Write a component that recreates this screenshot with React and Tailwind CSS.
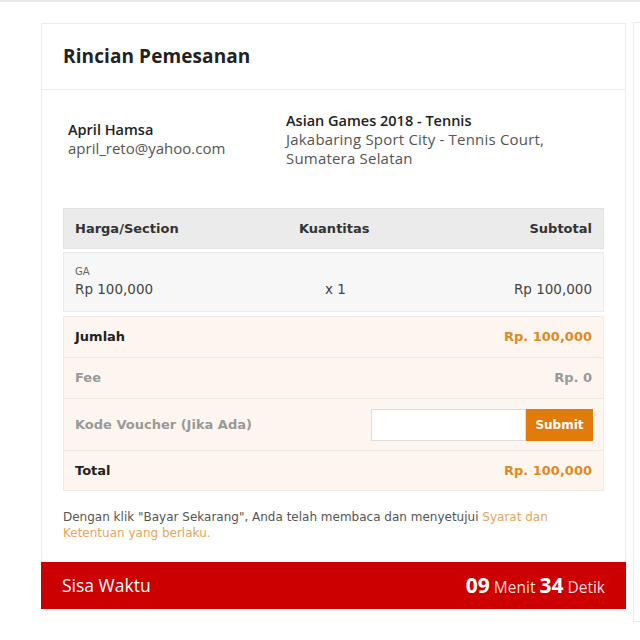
import React from 'react';

const rows = [
  { label: 'Jumlah', value: 'Rp. 100,000', strong: true },
  { label: 'Fee', value: 'Rp. 0', strong: false },
];

export default function App() {
  return (
    <div className="w-[640px] h-[640px] bg-white border-t-2 border-[#e8e8e8] overflow-hidden relative font-['Open_Sans',sans-serif]">
      {/* second card peeking on the right */}
      <div className="absolute left-[633px] top-[20px] w-[40px] h-[600px] border border-[#ececec] bg-white" />

      <div className="ml-[41px] mt-[21px] w-[585px] border border-[#ececec] bg-white">
        {/* Header */}
        <div className="h-[66px] flex items-center px-[21px] border-b border-[#ececec]">
          <h1 className="text-[19px] font-bold text-[#222] tracking-[0.1px]">Rincian Pemesanan</h1>
        </div>

        {/* Customer / event */}
        <div className="flex px-[21px] pt-[21px] h-[118px]">
          <div className="w-[223px] pl-[5px] pt-[9px] leading-[19px] text-[15px]">
            <div className="font-semibold text-[#222] text-[14.5px]">April Hamsa</div>
            <div className="text-[#555]">april_reto@yahoo.com</div>
          </div>
          <div className="leading-[19px] text-[15px]">
            <div className="font-semibold text-[#222] text-[14.5px]">Asian Games 2018 - Tennis</div>
            <div className="text-[#555] tracking-[0.2px]">Jakabaring Sport City - Tennis Court,</div>
            <div className="text-[#555] tracking-[0.2px]">Sumatera Selatan</div>
          </div>
        </div>

        {/* Table */}
        <div className="mx-[21px] font-['DejaVu_Sans',sans-serif]">
          <div className="h-[41px] bg-[#ebebeb] border border-[#e2e2e2] flex items-center px-[11px] text-[13px] font-bold text-[#333]">
            <div className="w-[224px]">Harga/Section</div>
            <div className="flex-1">Kuantitas</div>
            <div>Subtotal</div>
          </div>
          <div className="mt-[3px] h-[60px] bg-[#f6f7f6] border border-[#ececec] flex items-center px-[11px] text-[13.5px] text-[#444]">
            <div className="w-[250px]">
              <div className="text-[10px] text-[#666] leading-[14px]">GA</div>
              <div className="leading-[20px]">Rp 100,000</div>
            </div>
            <div className="flex-1 pt-[14px]">x 1</div>
            <div className="pt-[14px]">Rp 100,000</div>
          </div>
          <div className="mt-[4px] bg-[#fdf6f0] border border-[#f3ebe3]">
            {rows.map((r) => (
              <div key={r.label} className="h-[41px] flex items-center justify-between px-[11px] border-b border-[#f1e9e1] text-[13px] font-bold">
                <span className={r.strong ? 'text-[#222]' : 'text-[#999]'}>{r.label}</span>
                <span className={r.strong ? 'text-[#e08a1e]' : 'text-[#999]'}>{r.value}</span>
              </div>
            ))}
            <div className="h-[52px] flex items-center justify-between pl-[11px] pr-[10px] border-b border-[#f1e9e1] text-[13px] font-bold">
              <span className="text-[#999]">Kode Voucher (Jika Ada)</span>
              <div className="flex h-[32px]">
                <input className="w-[155px] h-full bg-white border border-[#ddd] outline-none" />
                <button className="w-[67px] h-full bg-[#e07b0c] text-white text-[12px] font-bold">Submit</button>
              </div>
            </div>
            <div className="h-[39px] flex items-center justify-between px-[11px] text-[13px] font-bold">
              <span className="text-[#222]">Total</span>
              <span className="text-[#e08a1e]">Rp. 100,000</span>
            </div>
          </div>
        </div>

        {/* Disclaimer */}
        <p className="mx-[21px] mt-[18px] mb-[21px] text-[12px] leading-[16px] text-[#555] font-['DejaVu_Sans',sans-serif] pr-[40px]">
          Dengan klik "Bayar Sekarang", Anda telah membaca dan menyetujui{' '}
          <span className="text-[#e8a55a]">Syarat dan Ketentuan yang berlaku.</span>
        </p>

        {/* Timer */}
        <div className="h-[47px] bg-[#cc0000] flex items-center justify-between px-[21px] text-white -mx-px -mb-px">
          <span className="text-[17.5px]">Sisa Waktu</span>
          <span className="flex items-baseline gap-[4px]">
            <b className="text-[21px]">09</b>
            <span className="text-[15.5px] text-[#f3dcdc]">Menit</span>
            <b className="text-[21px]">34</b>
            <span className="text-[15.5px] text-[#f3dcdc]">Detik</span>
          </span>
        </div>
      </div>
    </div>
  );
}
